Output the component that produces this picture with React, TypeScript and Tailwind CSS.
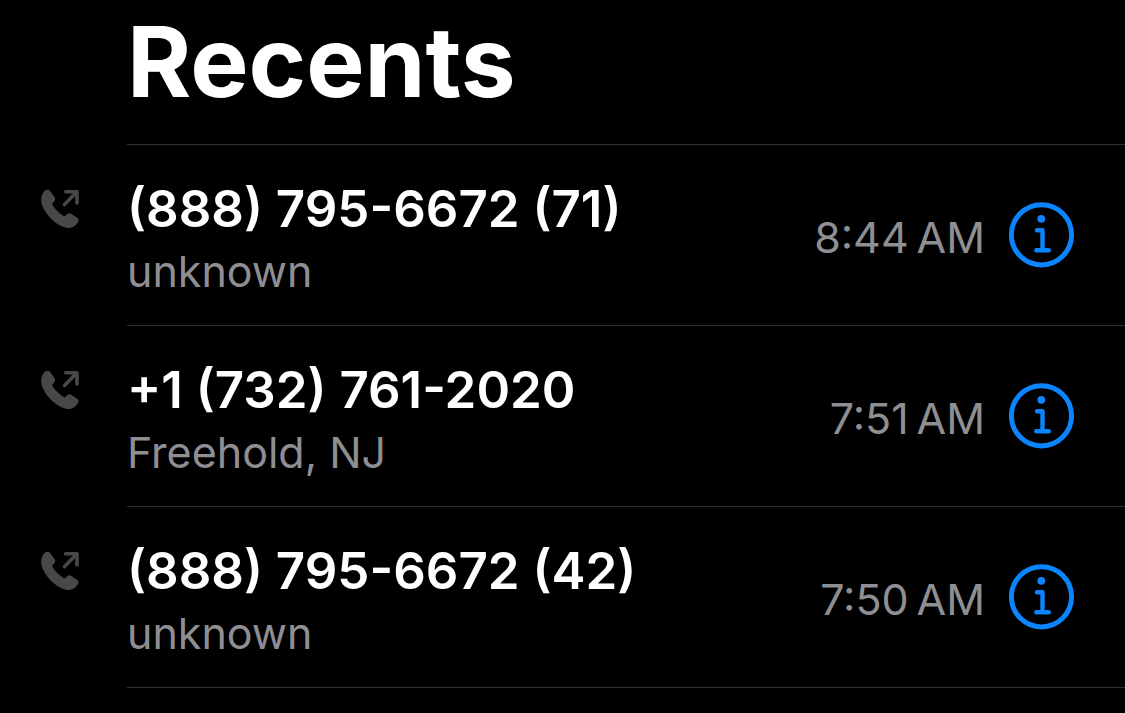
import React from "react";

type Call = {
	id: number;
	name: string;
	location: string;
	time: string;
};

const calls: Call[] = [
	{ id: 1, name: "(888) 795-6672 (71)", location: "unknown", time: "8:44\u2009AM" },
	{ id: 2, name: "+1 (732) 761-2020", location: "Freehold, NJ", time: "7:51\u2009AM" },
	{ id: 3, name: "(888) 795-6672 (42)", location: "unknown", time: "7:50\u2009AM" },
];

const OutgoingIcon = () => {
	return (
		<svg className="size-10 text-[#48484a]" viewBox="0 0 40 40" role="img" aria-label="Outgoing call">
			<path
				fill="currentColor"
				d="M5.6 1.3C7.2.5 9 .7 10.2 2.100l4.300 6c1 1.400.9 3-.2 4.200l-1.600 1.700c-.6.6-.6 1.300-.2 2 1.100 2 2.800 4.100 4.900 6.100 2.100 2.100 4.200 3.800 6.200 4.900.7.4 1.400.3 2-.3l1.700-1.600c1.200-1.100 2.700-1.200 4.200-.2l5.900 4.200c1.200.9 1.600 2.200.9 3.500C36.600 35.700 33.500 39 29.300 39 23.200 39 16.200 34.800 10.800 29.400 5.300 23.900 1.200 16.800 1.200 10.700c0-4.300 2-7.900 4.400-9.400Z"
			/>
			<path
				fill="none"
				stroke="currentColor"
				strokeWidth="3.6"
				strokeLinecap="round"
				strokeLinejoin="round"
				d="M24.500 15.500 36.500 3.300M25.700 2.800H37V14"
			/>
		</svg>
	);
};

const InfoIcon = () => {
	return (
		<svg className="size-full" viewBox="0 0 66 66" fill="none" stroke="currentColor" aria-hidden="true">
			<circle cx="32.5" cy="32.8" r="30.1" strokeWidth="5" />
			<circle cx="32.3" cy="16.8" r="3.9" fill="currentColor" stroke="none" />
			<path
				strokeWidth="4.4"
				strokeLinecap="round"
				strokeLinejoin="round"
				d="M28 28.300H33.500V48.200M27.300 48.200H39.800"
			/>
		</svg>
	);
};

const CallRow = ({ call }: { call: Call }) => {
	return (
		<li className="flex gap-[47px] pl-10">
			<div className="pt-11">
				<OutgoingIcon />
			</div>
			<div className="flex min-w-0 flex-1 items-center border-b border-[#303032] pr-[50px]">
				<div className="min-w-0 flex-1 pt-8 pb-6">
					<h2 className="text-[51px] leading-[64px] font-semibold text-white">{call.name}</h2>
					<p className="text-[43px] leading-[60px]">{call.location}</p>
				</div>
				<time className="mr-6 pt-1 text-[43px] leading-[60px] whitespace-nowrap">{call.time}</time>
				<button
					type="button"
					aria-label={`Details for ${call.name}`}
					className="size-[66px] shrink-0 text-[#0a84ff]"
				>
					<InfoIcon />
				</button>
			</div>
		</li>
	);
};

export default function App() {
	return (
		<main className="min-h-screen bg-black font-[Inter,sans-serif] text-[#8e8e93]">
			<header className="ml-[127px] border-b border-[#303032] pt-0.5 pb-[22px]">
				<h1 className="text-[98px] leading-[120px] font-bold text-white">Recents</h1>
			</header>
			<ul>
				{calls.map((call) => (
					<CallRow key={call.id} call={call} />
				))}
			</ul>
		</main>
	);
}
